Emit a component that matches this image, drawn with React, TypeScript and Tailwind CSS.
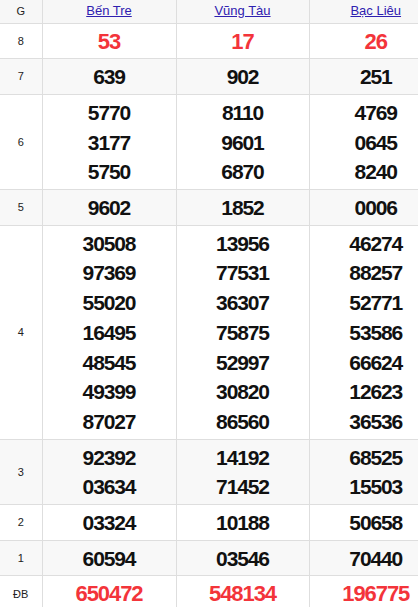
import React from 'react'

type Row = { label: string; values: string[][]; red?: boolean }

const provinces = ['Bến Tre', 'Vũng Tàu', 'Bạc Liêu']

const rows: Row[] = [
  { label: '8', values: [['53'], ['17'], ['26']], red: true },
  { label: '7', values: [['639'], ['902'], ['251']] },
  {
    label: '6',
    values: [
      ['5770', '3177', '5750'],
      ['8110', '9601', '6870'],
      ['4769', '0645', '8240'],
    ],
  },
  { label: '5', values: [['9602'], ['1852'], ['0006']] },
  {
    label: '4',
    values: [
      ['30508', '97369', '55020', '16495', '48545', '49399', '87027'],
      ['13956', '77531', '36307', '75875', '52997', '30820', '86560'],
      ['46274', '88257', '52771', '53586', '66624', '12623', '36536'],
    ],
  },
  {
    label: '3',
    values: [
      ['92392', '03634'],
      ['14192', '71452'],
      ['68525', '15503'],
    ],
  },
  { label: '2', values: [['03324'], ['10188'], ['50658']] },
  { label: '1', values: [['60594'], ['03546'], ['70440']] },
  { label: 'ĐB', values: [['650472'], ['548134'], ['196775']], red: true },
]

export default function App() {
  return (
    <div className="w-full overflow-hidden bg-white font-['Liberation_Sans',Arial,sans-serif]">
      <table className="w-[442px] table-fixed border-collapse">
        <colgroup>
          <col className="w-[42px]" />
          <col className="w-[134px]" />
          <col className="w-[133px]" />
          <col className="w-[133px]" />
        </colgroup>
        <thead>
          <tr className="h-[23px] bg-[#f7f7f7]">
            <th className="border-b border-[#dedede] p-0 text-center text-[11px] leading-[22px] font-normal text-[#222]">
              G
            </th>
            {provinces.map(p => (
              <th
                key={p}
                className="border-b border-l border-[#dedede] p-0 text-center text-[13px] leading-[22px] font-normal">
                <a href="#" className="text-[#2f20b0] underline">
                  {p}
                </a>
              </th>
            ))}
          </tr>
        </thead>
        <tbody>
          {rows.map((row, i) => (
            <tr key={row.label} className={i % 2 === 1 ? 'bg-[#f8f8f8]' : 'bg-white'}>
              <td className="border-b border-[#dedede] text-center text-[11px] text-[#222]">
                {row.label}
              </td>
              {row.values.map((nums, j) => (
                <td
                  key={j}
                  className={
                    row.red
                      ? 'border-b border-l border-[#dedede] pt-[3px] pb-[2px] text-center text-[22px] leading-[29.7px] font-bold tracking-[-1.1px] text-[#f3343a]'
                      : 'border-b border-l border-[#dedede] pt-[3px] pb-[2px] text-center text-[21px] leading-[29.7px] font-bold tracking-[-1.1px] text-[#111]'
                  }>
                  {nums.map(n => (
                    <div key={n}>{n}</div>
                  ))}
                </td>
              ))}
            </tr>
          ))}
        </tbody>
      </table>
    </div>
  )
}
